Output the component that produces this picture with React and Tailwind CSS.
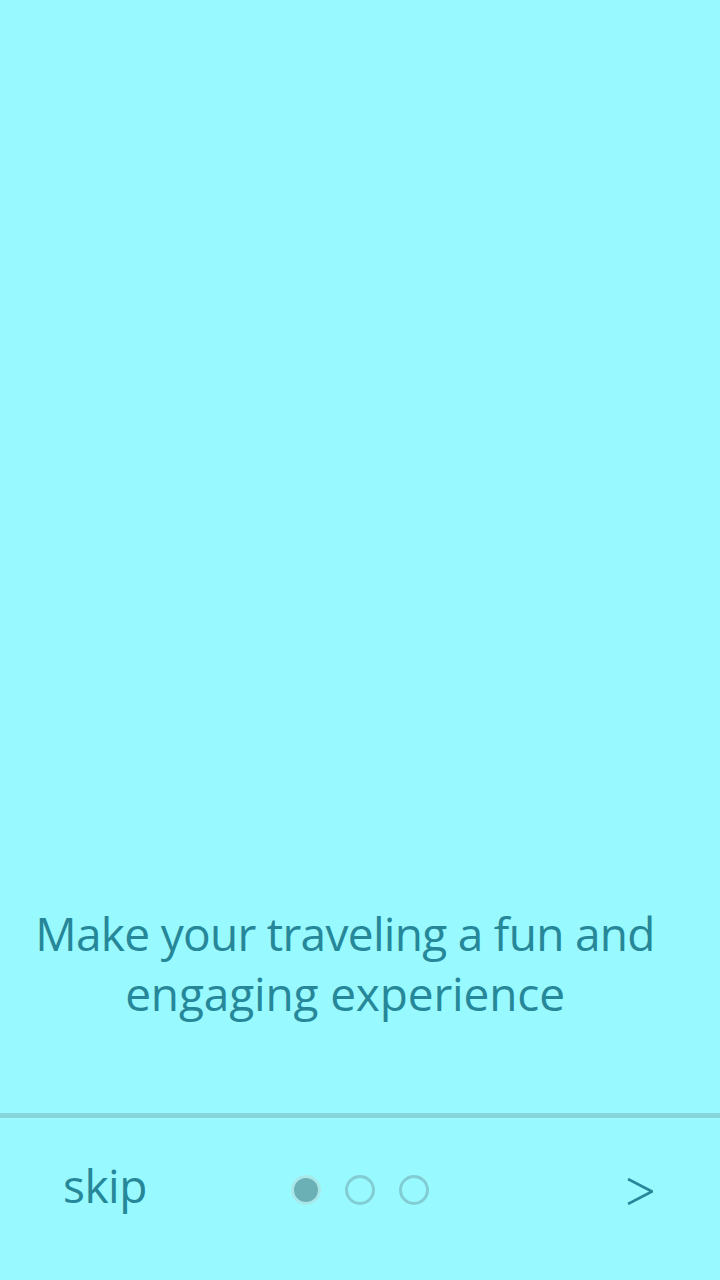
export default function App() {
  return (
    <div className="w-[720px] h-[1280px] bg-[#98f9fe] flex flex-col" style={{ fontFamily: '"Open Sans", "Noto Sans", sans-serif' }}>
      <div className="flex-1" />
      <div className="text-center text-[#268799] text-[46px] leading-[60px] tracking-[-0.7px] pb-[90px] pr-[30px]">
        <p>Make your traveling a fun and</p>
        <p className="tracking-[-0.15px]">engaging experience</p>
      </div>
      <div className="h-[5px] bg-[#86d5db]" />
      <div className="h-[162px] flex items-start pt-[39px] pl-[63px] pr-[67px] relative">
        <span className="text-[#268799] text-[46px] leading-[56px] tracking-[-0.5px]">skip</span>
        <div className="absolute left-[291px] top-[57px] flex gap-[24px]">
          <div className="w-[30px] h-[30px] rounded-full bg-[#6bb0b4] border-[3px] border-[#a8e8ea]" />
          <div className="w-[30px] h-[30px] rounded-full border-[3px] border-[#82cdd3]" />
          <div className="w-[30px] h-[30px] rounded-full border-[3px] border-[#82cdd3]" />
        </div>
        <div className="ml-auto mt-[21px]">
          <svg width="26" height="27" viewBox="0 0 26 27" fill="none">
            <path d="M1 1 L25 13.5 L1 26" stroke="#268799" strokeWidth="2.6" />
          </svg>
        </div>
      </div>
    </div>
  );
}
